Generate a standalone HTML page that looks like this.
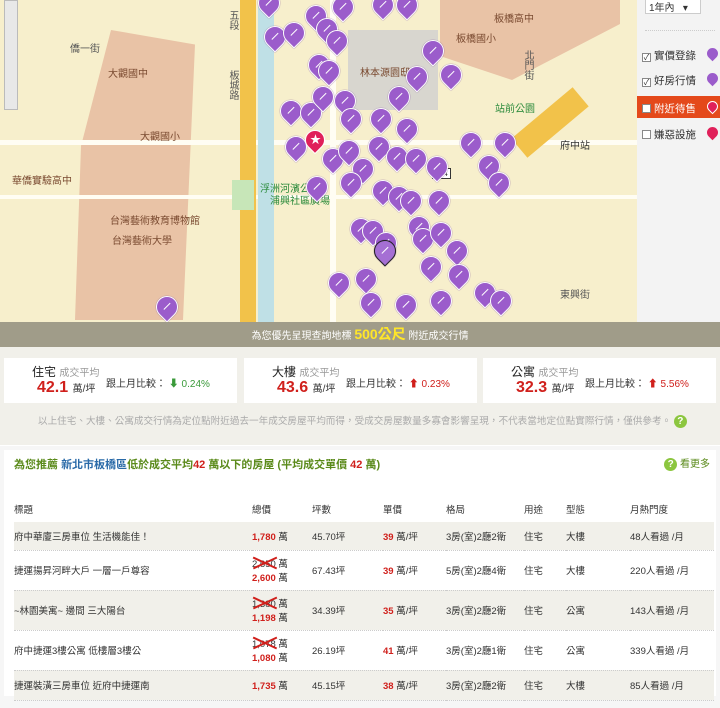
<!DOCTYPE html>
<html><head><meta charset="utf-8"><style>
*{margin:0;padding:0;box-sizing:border-box}
body{width:720px;height:708px;overflow:hidden;font-family:"Liberation Sans","Noto Sans CJK TC",sans-serif;font-size:10px;color:#333;background:#fff;position:relative}
#map{position:absolute;left:0;top:0;width:637px;height:322px;background:#f7efcc;overflow:hidden}
.blk{position:absolute;background:#e9c3a6}
.gry{position:absolute;background:#d8d6cf}
.rd{position:absolute;background:#fffdf3}
.m{position:absolute;width:22px;height:22px;background:#9b5ccb;border-radius:50% 50% 50% 0;transform:rotate(-45deg);border:1px solid #fff;box-shadow:0 0 1px #6a3a90}
.m::after{content:"";position:absolute;left:6px;top:9px;width:9px;height:3px;border-top:1.5px solid #fff}
.t{position:absolute;font-size:10px;color:#555;writing-mode:vertical-rl}
.h{position:absolute;font-size:10px;color:#555;white-space:nowrap}
#side{position:absolute;left:637px;top:0;width:83px;height:322px;background:#f3f3f3}
#side .opt{position:absolute;left:5px;font-size:10.5px;color:#333;white-space:nowrap}
.cb{display:inline-block;width:9px;height:9px;border:1px solid #888;background:#fff;vertical-align:-1px;margin-right:3px;font-size:8px;line-height:7px;text-align:center}
.pin{position:absolute;left:70px;width:11px;height:11px;border-radius:50% 50% 50% 0;transform:rotate(-45deg)}
#ban{position:absolute;top:322px;left:0;width:720px;height:25px;background:#a09c89;color:#fff;text-align:center;font-size:10px;line-height:25px;white-space:nowrap}
#ban b{color:#ffe629;font-size:14px}
#stat{position:absolute;top:347px;left:0;width:720px;height:98px;background:#f1f0ea}
.box{position:absolute;top:11px;width:233px;height:45px;background:#fff;white-space:nowrap}
.box .a{position:absolute;left:28px;top:5px;font-size:12px;color:#222}
.box .a span{font-size:10px;color:#999}
.box .b{position:absolute;left:33px;top:21px;font-size:16px;font-weight:bold;color:#d0201c}
.box .b span{font-size:10px;color:#333;font-weight:normal}
.box .c{position:absolute;left:102px;top:17px;font-size:10px}
.note{position:absolute;top:66px;left:38px;color:#aaa;font-size:9.6px;white-space:nowrap}
.q{display:inline-block;width:13px;height:13px;border-radius:50%;background:#8cc63f;color:#fff;font-size:10px;text-align:center;line-height:13px;font-weight:bold}
#rec{position:absolute;top:446px;left:0;width:720px;height:262px;background:#f6f6f6}
#inner{position:absolute;top:4px;left:4px;width:712px;height:246px;background:#fff}
h2{position:absolute;top:6px;left:10px;font-size:11px;color:#5a8a1a;font-weight:bold;white-space:nowrap}
table{position:absolute;top:46px;left:10px;width:700px;border-collapse:collapse;font-size:9.5px;table-layout:fixed;white-space:nowrap}
td{padding:0;height:18px}
tr.r td{border-bottom:1px dotted #ccc}
tr.g td{background:#f1f0ea}
.red{color:#d0201c}
.del{position:relative;display:inline-block;color:#333}
.del::before,.del::after{content:"";position:absolute;left:0;top:6px;width:26px;height:1.5px;background:#d0201c;transform:rotate(25deg)}
.del::after{transform:rotate(-25deg)}
</style></head><body>
<div id="map">
<div class="blk" style="left:75px;top:30px;width:120px;height:290px;clip-path:polygon(30% 0,100% 5%,90% 100%,0 100%,5% 40%)"></div>
<div class="blk" style="left:440px;top:0;width:180px;height:80px;clip-path:polygon(0 0,100% 0,100% 30%,40% 100%,0 70%)"></div>
<div class="gry" style="left:348px;top:30px;width:90px;height:80px"></div>
<div class="rd" style="left:0;top:140px;width:637px;height:5px"></div>
<div class="rd" style="left:0;top:195px;width:637px;height:4px"></div>
<div class="rd" style="left:330px;top:0;width:6px;height:322px"></div>
<div style="position:absolute;left:240px;top:0;width:16px;height:322px;background:#f2c24a"></div>
<div style="position:absolute;left:258px;top:0;width:16px;height:322px;background:#bfe0e6"></div>
<div style="position:absolute;left:232px;top:180px;width:22px;height:30px;background:#c7e6b8"></div>
<div style="position:absolute;left:510px;top:110px;width:80px;height:25px;background:#f2c24a;transform:rotate(-40deg)"></div>
<span class="h" style="left:108px;top:65px;color:#7a4a30">大觀國中</span>
<span class="h" style="left:140px;top:128px;color:#7a4a30">大觀國小</span>
<span class="h" style="left:12px;top:172px;color:#7a4a30">華僑實驗高中</span>
<span class="h" style="left:110px;top:212px;color:#7a4a30">台灣藝術教育博物館</span>
<span class="h" style="left:112px;top:232px;color:#7a4a30">台灣藝術大學</span>
<span class="h" style="left:360px;top:64px;color:#7a4a30">林本源園邸</span>
<span class="h" style="left:494px;top:10px;color:#7a4a30">板橋高中</span>
<span class="h" style="left:456px;top:30px;color:#7a4a30">板橋國小</span>
<span class="h" style="left:260px;top:180px;color:#2a8a3a">浮洲河濱公園</span>
<span class="h" style="left:270px;top:192px;color:#2a8a3a">浦興社區廣場</span>
<span class="h" style="left:495px;top:100px;color:#2a8a3a">站前公園</span>
<span class="h" style="left:560px;top:137px;color:#333">府中站</span>
<span class="h" style="left:70px;top:40px">僑一街</span>
<span class="h" style="left:560px;top:286px">東興街</span>
<span class="t" style="left:225px;top:10px">五段</span>
<span class="t" style="left:225px;top:70px">板城路</span>
<span class="t" style="left:520px;top:50px">北門街</span>
<div style="position:absolute;left:432px;top:168px;border:1px solid #333;background:#fff;font-size:8px;padding:0 2px">114</div>
<div style="position:absolute;left:4px;top:0;width:14px;height:110px;background:#e8e8e8;border:1px solid #bbb"></div>
</div>
<div id="markers" style="position:absolute;left:0;top:0;width:637px;height:322px;overflow:hidden">
<div class="m" style="left:258px;top:-8px"></div><div class="m" style="left:305px;top:5px"></div><div class="m" style="left:316px;top:18px"></div><div class="m" style="left:332px;top:-4px"></div><div class="m" style="left:372px;top:-6px"></div><div class="m" style="left:396px;top:-6px"></div>
<div class="m" style="left:264px;top:26px"></div><div class="m" style="left:283px;top:22px"></div><div class="m" style="left:308px;top:54px"></div><div class="m" style="left:318px;top:60px"></div><div class="m" style="left:326px;top:30px"></div><div class="m" style="left:334px;top:90px"></div>
<div class="m" style="left:280px;top:100px"></div><div class="m" style="left:300px;top:102px"></div><div class="m" style="left:340px;top:108px"></div><div class="m" style="left:312px;top:86px"></div>
<div class="m" style="left:285px;top:136px"></div><div class="m" style="left:322px;top:148px"></div><div class="m" style="left:338px;top:140px"></div><div class="m" style="left:352px;top:158px"></div><div class="m" style="left:368px;top:136px"></div>
<div class="m" style="left:306px;top:176px"></div><div class="m" style="left:340px;top:172px"></div><div class="m" style="left:370px;top:108px"></div><div class="m" style="left:388px;top:86px"></div><div class="m" style="left:406px;top:66px"></div><div class="m" style="left:422px;top:40px"></div><div class="m" style="left:440px;top:64px"></div>
<div class="m" style="left:396px;top:118px"></div><div class="m" style="left:386px;top:146px"></div><div class="m" style="left:405px;top:148px"></div><div class="m" style="left:426px;top:156px"></div><div class="m" style="left:460px;top:132px"></div><div class="m" style="left:494px;top:132px"></div><div class="m" style="left:478px;top:155px"></div><div class="m" style="left:488px;top:172px"></div>
<div class="m" style="left:372px;top:180px"></div><div class="m" style="left:388px;top:186px"></div><div class="m" style="left:400px;top:190px"></div><div class="m" style="left:428px;top:190px"></div><div class="m" style="left:350px;top:218px"></div><div class="m" style="left:362px;top:220px"></div><div class="m" style="left:375px;top:232px"></div><div class="m" style="left:408px;top:216px"></div><div class="m" style="left:412px;top:228px"></div><div class="m" style="left:430px;top:222px"></div><div class="m" style="left:446px;top:240px"></div><div class="m" style="left:420px;top:256px"></div>
<div class="m" style="left:328px;top:272px"></div><div class="m" style="left:355px;top:268px"></div><div class="m" style="left:360px;top:292px"></div><div class="m" style="left:395px;top:294px"></div><div class="m" style="left:430px;top:290px"></div><div class="m" style="left:474px;top:282px"></div><div class="m" style="left:490px;top:290px"></div><div class="m" style="left:448px;top:264px"></div><div class="m" style="left:156px;top:296px"></div><div class="m" style="left:374px;top:240px;background:#a56fd4;border-color:#222"></div>
</div>
<div style="position:absolute;left:305px;top:130px;width:20px;height:20px;background:#e0205a;border-radius:50% 50% 50% 0;transform:rotate(-45deg);border:1px solid #fff"></div>
<div style="position:absolute;left:310px;top:131px;color:#fff;font-size:11px">★</div>
<div id="side">
<div style="position:absolute;left:8px;top:-2px;width:56px;height:16px;background:#fff;border:1px solid #ccc;font-size:10px;padding-left:3px;white-space:nowrap">1年內 &nbsp;&nbsp;▾</div>
<div style="position:absolute;left:8px;top:30px;width:70px;border-top:1px dotted #ccc"></div>
<div class="opt" style="top:48px"><span class="cb">✓</span>實價登錄</div><div class="pin" style="top:48px;background:#9b5ccb"></div>
<div class="opt" style="top:73px"><span class="cb">✓</span>好房行情</div><div class="pin" style="top:73px;background:#9b5ccb"></div>
<div style="position:absolute;left:0;top:96px;width:83px;height:22px;background:#e4491b"></div>
<div class="opt" style="top:101px;color:#fff"><span class="cb"></span>附近待售</div><div class="pin" style="top:101px;background:#e0205a;border:1px solid #fff"></div>
<div class="opt" style="top:127px"><span class="cb"></span>嫌惡設施</div><div class="pin" style="top:127px;background:#e0205a"></div>
</div>
<div id="ban">為您優先呈現查詢地標 <b>500公尺</b> 附近成交行情</div>
<div id="stat">
<div class="box" style="left:4px"><div class="a">住宅 <span>成交平均</span></div><div class="b">42.1 <span>萬/坪</span></div><div class="c">跟上月比較： <span style="color:#3a9a3a">⬇ 0.24%</span></div></div>
<div class="box" style="left:244px"><div class="a">大樓 <span>成交平均</span></div><div class="b">43.6 <span>萬/坪</span></div><div class="c">跟上月比較： <span class="red">⬆ 0.23%</span></div></div>
<div class="box" style="left:483px"><div class="a">公寓 <span>成交平均</span></div><div class="b">32.3 <span>萬/坪</span></div><div class="c">跟上月比較： <span class="red">⬆ 5.56%</span></div></div>
<div class="note">以上住宅、大樓、公寓成交行情為定位點附近過去一年成交房屋平均而得，受成交房屋數量多寡會影響呈現，不代表當地定位點實際行情，僅供參考。 <span class="q">?</span></div>
</div>
<div id="rec"><div id="inner">
<h2>為您推薦 <span style="color:#2a6aa8">新北市板橋區</span>低於成交平均<span class="red">42</span> 萬以下的房屋 (平均成交單價 <span class="red">42</span> 萬)</h2>
<div style="position:absolute;right:6px;top:5px;font-size:10px;color:#5a8a1a;white-space:nowrap"><span class="q">?</span> 看更多</div>
<table>
<colgroup><col style="width:238px"><col style="width:60px"><col style="width:71px"><col style="width:63px"><col style="width:78px"><col style="width:42px"><col style="width:64px"><col></colgroup>
<tr style="height:26px"><td>標題</td><td>總價</td><td>坪數</td><td>單價</td><td>格局</td><td>用途</td><td>型態</td><td>月熱門度</td></tr>
<tr class="r g" style="height:28px"><td>府中華廈三房車位 生活機能佳！</td><td><b class="red">1,780</b> 萬</td><td>45.70坪</td><td><b class="red">39</b> 萬/坪</td><td>3房(室)2廳2衛</td><td>住宅</td><td>大樓</td><td>48人看過 /月</td></tr>
<tr class="r" style="height:40px"><td>捷運揚昇河畔大戶 一層一戶尊容</td><td><span class="del">2,650 萬</span><br><b class="red">2,600</b> 萬</td><td>67.43坪</td><td><b class="red">39</b> 萬/坪</td><td>5房(室)2廳4衛</td><td>住宅</td><td>大樓</td><td>220人看過 /月</td></tr>
<tr class="r g" style="height:40px"><td>~林園美寓~ 邊間 三大陽台</td><td><span class="del">1,380 萬</span><br><b class="red">1,198</b> 萬</td><td>34.39坪</td><td><b class="red">35</b> 萬/坪</td><td>3房(室)2廳2衛</td><td>住宅</td><td>公寓</td><td>143人看過 /月</td></tr>
<tr class="r" style="height:40px"><td>府中捷運3樓公寓 低樓層3樓公</td><td><span class="del">1,078 萬</span><br><b class="red">1,080</b> 萬</td><td>26.19坪</td><td><b class="red">41</b> 萬/坪</td><td>3房(室)2廳1衛</td><td>住宅</td><td>公寓</td><td>339人看過 /月</td></tr>
<tr class="r g" style="height:30px"><td>捷運裝潢三房車位 近府中捷運南</td><td><b class="red">1,735</b> 萬</td><td>45.15坪</td><td><b class="red">38</b> 萬/坪</td><td>3房(室)2廳2衛</td><td>住宅</td><td>大樓</td><td>85人看過 /月</td></tr>
</table>
</div></div>
</body></html>
